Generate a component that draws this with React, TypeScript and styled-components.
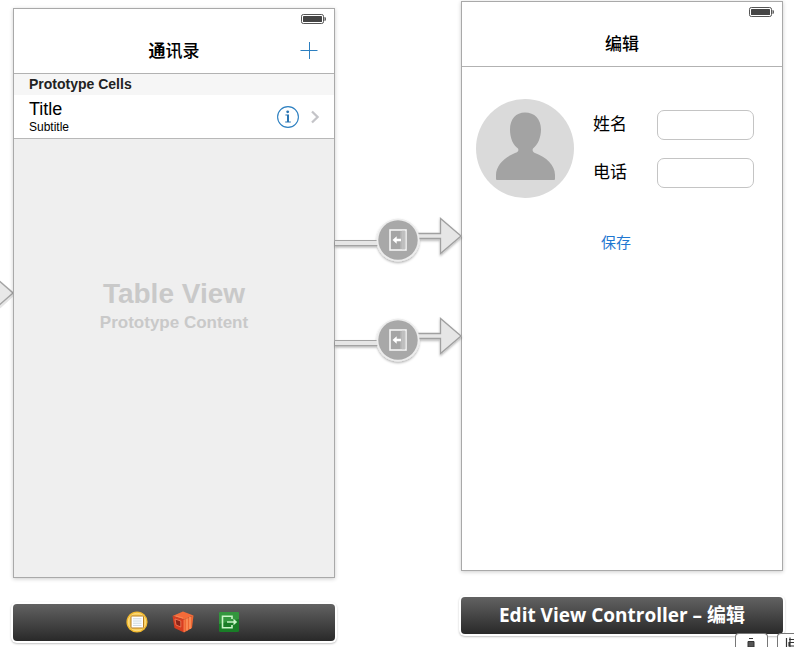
import React from "react";
import styled, { createGlobalStyle } from "styled-components";

const GlobalStyle = createGlobalStyle`
  * { box-sizing: border-box; }
  body {
    margin: 0;
    background: #fff;
    color: #000;
    font-family: "Liberation Sans", "Noto Sans CJK SC", sans-serif;
  }
  button, input { font: inherit; }
`;

const Canvas = styled.main`
  position: relative;
  display: grid;
  grid-template-columns: 13px minmax(0, 1fr) 126px minmax(0, 1fr) 11px;
  height: 100vh;
  overflow: hidden;
`;

const EntryLane = styled.div`
  padding-top: 278px;
`;

const SegueLane = styled.div`
  display: flex;
  flex-direction: column;
  gap: 48px;
  padding-top: 216px;
  z-index: 1;
`;

const Drawing = styled.svg`
  display: block;
  overflow: visible;
`;

const Scene = styled.section<{ $top: number }>`
  display: flex;
  flex-direction: column;
  gap: 26px;
  padding-top: ${(p) => p.$top}px;
`;

const Phone = styled.div<{ $bg: string }>`
  display: flex;
  flex-direction: column;
  min-height: 570px;
  background: ${(p) => p.$bg};
  border: 1px solid #a9a9a9;
  box-shadow: 0 1px 4px rgba(0, 0, 0, 0.2);
`;

const StatusBar = styled.div`
  display: flex;
  justify-content: flex-end;
  height: 20px;
  padding: 5px 8px 0 0;
  background: #fff;
`;

const NavBar = styled.header`
  display: grid;
  grid-template-columns: 1fr auto 1fr;
  align-items: center;
  height: 45px;
  background: #fff;
  border-bottom: 1px solid #b2b2b2;
`;

const NavTitle = styled.h1`
  grid-column: 2;
  margin: 0;
  padding-top: 2px;
  font-size: 17px;
  line-height: 24px;
  font-weight: 500;
`;

const IconButton = styled.button`
  display: block;
  padding: 0;
  border: 0;
  background: none;
  cursor: pointer;
`;

const AddButton = styled(IconButton)`
  justify-self: end;
  margin-right: 16px;
`;

const SectionHeader = styled.h2`
  margin: 0;
  padding: 0 15px;
  background: #f6f6f6;
  color: #222;
  font-size: 14px;
  line-height: 21px;
  font-weight: 700;
`;

const Cell = styled.div`
  display: flex;
  align-items: center;
  gap: 12px;
  height: 44px;
  padding: 0 15px;
  background: #fff;
  border-bottom: 1px solid #b8b8b8;
`;

const CellText = styled.div`
  flex: 1;
`;

const CellTitle = styled.div`
  font-size: 18px;
  line-height: 20px;
`;

const CellSubtitle = styled.div`
  font-size: 12px;
  line-height: 16px;
`;

const Placeholder = styled.div`
  padding-top: 137px;
  color: #c9c9c9;
  font-weight: 700;
  text-align: center;
`;

const PlaceholderTitle = styled.div`
  font-size: 28px;
  line-height: 35px;
`;

const PlaceholderNote = styled.div`
  font-size: 17px;
  line-height: 24px;
`;

const Dock = styled.footer`
  height: 37px;
  border-radius: 4px;
  background: linear-gradient(#626262, #292929);
  box-shadow: 0 0 0 2px #fff, 0 1px 2px 2px rgba(0, 0, 0, 0.24);
`;

const IconDock = styled(Dock)`
  display: flex;
  align-items: center;
  justify-content: center;
  gap: 24px;
  padding: 0 0 2px 18px;
`;

const TitleDock = styled(Dock)`
  color: #fff;
  font: 700 19px/36px "Open Sans", "Noto Sans CJK SC", sans-serif;
  text-align: center;
`;

const Form = styled.form`
  display: flex;
  align-items: flex-start;
  gap: 19px;
  padding: 32px 28px 0 14px;
`;

const Fields = styled.div`
  flex: 1;
  display: flex;
  flex-direction: column;
  gap: 18px;
  padding-top: 11px;
`;

const Field = styled.div`
  display: grid;
  grid-template-columns: 64px minmax(0, 1fr);
  align-items: center;
`;

const Label = styled.label`
  font-size: 17px;
  line-height: 28px;
`;

const TextBox = styled.input`
  width: 100%;
  height: 30px;
  padding: 0 8px;
  border: 1px solid #c4c4c4;
  border-radius: 7px;
  background: #fff;
`;

const SaveButton = styled.button`
  align-self: flex-start;
  margin-top: 24px;
  padding: 0 8px;
  border: 0;
  background: none;
  color: #1f78d1;
  font-size: 15px;
  line-height: 26px;
  cursor: pointer;
`;

const CanvasTools = styled.div`
  position: absolute;
  right: -16px;
  bottom: 0;
  display: flex;
  gap: 9px;
  z-index: 2;
`;

const ToolButton = styled.button`
  width: 33px;
  height: 14px;
  padding: 0;
  border: 1px solid #777;
  border-bottom: 0;
  border-radius: 4px 4px 0 0;
  background: #fff;
  overflow: hidden;
`;

const Battery = () => (
  <Drawing width="25" height="10" viewBox="0 0 25 10" aria-hidden="true">
    <rect x="0.5" y="0.5" width="22" height="9" rx="1.8" fill="#fff" stroke="#555" />
    <rect x="2" y="2" width="19" height="6" rx="0.6" fill="#454545" />
    <path d="M23.5 3h.6q.9.3.9 2t-.9 2h-.6z" fill="#555" />
  </Drawing>
);

const Segue = () => (
  <Drawing width="126" height="52" viewBox="0 0 126 52" aria-hidden="true">
    <defs>
      <filter id="lift" x="-20%" y="-20%" width="140%" height="150%">
        <feDropShadow dx="0" dy="1.5" stdDeviation="1.2" floodOpacity="0.3" />
      </filter>
    </defs>
    <g filter="url(#lift)">
      <path d="M0 24.5H44V29.5H0z" fill="#e6e6e6" />
      <path d="M0 24.5H44M0 29.5H44" stroke="#a3a3a3" />
      <path d="M82 17.5H106V2.5L126.5 20L106 37.5V22.5H82z" fill="#e6e6e6" />
      <path d="M82 17.5H105.5V2.5L126 20L105.5 37.5V22.5H82" fill="none" stroke="#a0a0a0" strokeWidth="1.3" />
      <circle cx="63" cy="24" r="21.5" fill="#ededed" />
    </g>
    <circle cx="63" cy="24" r="19.7" fill="#a8a8a8" />
    <rect x="55" y="14" width="16" height="20" fill="#a4a4a4" stroke="#f4f4f4" strokeWidth="1.6" />
    <path d="M66 15.2V33M67 15.2h3v17.6h-3z" fill="#bebebe" stroke="#c4c4c4" strokeWidth="0.8" />
    <path d="M57.5 24l4.2-3.8v2.5h4.3v2.6h-4.3v2.5z" fill="#fff" />
  </Drawing>
);

const EntryArrow = () => (
  <Drawing width="13" height="32" viewBox="0 0 13 32" aria-hidden="true">
    <path d="M-3 3L0 5L13 16L0 28L-3 30" fill="none" stroke="#000" strokeOpacity="0.1" strokeWidth="4" />
    <path d="M-3 1L13 15L-3 29z" fill="#e8e8e8" stroke="#a3a3a3" strokeWidth="1.4" />
  </Drawing>
);

const Avatar = () => (
  <Drawing width="98" height="99" viewBox="0 0 98 99" role="img" aria-label="头像">
    <ellipse cx="49" cy="49.5" rx="49" ry="49.5" fill="#dadada" />
    <path
      d="M49 13.5C58.5 13.5 65 20 65 30.5C65 39 61.5 46 57 49.5C56 51.5 57 53 59 54C70 58 79 66 79 76V80Q79 81 78 81H21Q20 81 20 80V76C20 66 29 58 39 54C42 53 43 51.5 42 49.5C37 46 34 39 34 30.5C34 20 40 13.5 49 13.5Z"
      fill="#a3a3a3"
    />
  </Drawing>
);

const ControllerIcon = () => (
  <Drawing width="22" height="22" viewBox="0 0 22 22" aria-hidden="true">
    <circle cx="11" cy="11" r="10.6" fill="#f2b92e" />
    <circle cx="11" cy="11" r="8.8" fill="#f8cf61" stroke="#ffe08b" strokeWidth="0.8" />
    <rect x="5" y="5" width="12.5" height="12" rx="0.8" fill="#fff" stroke="#b77c1c" />
    <path d="M7 7.8h8.5M7 10h8.5M7 12.2h8.5M7 14.4h8.5" stroke="#bccbd6" strokeWidth="0.8" />
  </Drawing>
);

const ResponderIcon = () => (
  <Drawing width="22" height="22" viewBox="0 0 22 22" aria-hidden="true">
    <path d="M.5 5L11 .5L21.5 4.5L12 8.5z" fill="#f46b39" />
    <path d="M.5 5L12 8.5V21.5L2.5 17z" fill="#d83d20" />
    <path d="M12 8.5L21.5 4.5L20 17L12 21.5z" fill="#ee6733" />
    <path d="M3 8L8.8 10V16L4 14z" fill="#8e2417" stroke="#f3835f" strokeWidth="0.8" />
    <path d="M15 7.5V19.5M18 6V18" stroke="#ff9b65" strokeWidth="1.3" />
    <path d="M4 5L11 7M12 8.5V21" stroke="#ff8e5e" strokeWidth="0.7" />
  </Drawing>
);

const ExitIcon = () => (
  <Drawing width="22" height="22" viewBox="0 0 22 22" aria-hidden="true">
    <rect x="1" y="1" width="20" height="20" rx="1.5" fill="#197d27" />
    <path d="M2 1h18q1 0 1 1v6L1 13V2q0-1 1-1" fill="#33963e" />
    <path d="M14 8V5.2H4.5V16.8H14V14" fill="none" stroke="#c9f5c7" strokeWidth="1.6" />
    <path d="M9 11h8" fill="none" stroke="#c9f5c7" strokeWidth="1.5" />
    <path d="M15.5 7.8L19.2 11l-3.7 3.2z" fill="#c9f5c7" />
  </Drawing>
);

const ListScene = () => (
  <Scene $top={8}>
    <Phone $bg="#efefef">
      <StatusBar><Battery /></StatusBar>
      <NavBar>
        <NavTitle><b>通</b>讯录</NavTitle>
        <AddButton type="button" aria-label="添加">
          <Drawing width="18" height="18" viewBox="0 0 18 18">
            <path d="M.5 8.5H17.5M9.5 0V17" stroke="#2c7fc0" />
          </Drawing>
        </AddButton>
      </NavBar>
      <SectionHeader>Prototype Cells</SectionHeader>
      <Cell>
        <CellText>
          <CellTitle>Title</CellTitle>
          <CellSubtitle>Subtitle</CellSubtitle>
        </CellText>
        <IconButton type="button" aria-label="详细信息">
          <Drawing width="22" height="22" viewBox="0 0 22 22">
            <circle cx="11" cy="11" r="10.4" fill="none" stroke="#2c7fc0" strokeWidth="1.1" />
            <circle cx="10.7" cy="5.8" r="1.4" fill="#2874b2" />
            <path d="M8.4 8.6H12V15.6H13.8V16.6H8.2V15.6H10V9.6H8.4z" fill="#2874b2" />
          </Drawing>
        </IconButton>
        <Drawing width="8" height="14" viewBox="0 0 8 14" aria-hidden="true">
          <path d="M1 1.5L6.6 7L1 12.5" fill="none" stroke="#c4c4c8" strokeWidth="2.3" />
        </Drawing>
      </Cell>
      <Placeholder>
        <PlaceholderTitle>Table View</PlaceholderTitle>
        <PlaceholderNote>Prototype Content</PlaceholderNote>
      </Placeholder>
    </Phone>
    <IconDock>
      <ControllerIcon />
      <ResponderIcon />
      <ExitIcon />
    </IconDock>
  </Scene>
);

const EditScene = () => (
  <Scene $top={1}>
    <Phone $bg="#fff">
      <StatusBar><Battery /></StatusBar>
      <NavBar><NavTitle>编辑</NavTitle></NavBar>
      <Form onSubmit={(event) => event.preventDefault()}>
        <Avatar />
        <Fields>
          <Field>
            <Label htmlFor="name">姓名</Label>
            <TextBox id="name" type="text" />
          </Field>
          <Field>
            <Label htmlFor="phone">电话</Label>
            <TextBox id="phone" type="tel" />
          </Field>
          <SaveButton type="submit">保存</SaveButton>
        </Fields>
      </Form>
    </Phone>
    <TitleDock>Edit View Controller – 编辑</TitleDock>
  </Scene>
);

export default function App() {
  return (
    <>
      <GlobalStyle />
      <Canvas>
        <EntryLane><EntryArrow /></EntryLane>
        <ListScene />
        <SegueLane>
          <Segue />
          <Segue />
        </SegueLane>
        <EditScene />
        <CanvasTools>
          <ToolButton type="button" aria-label="Align">
            <Drawing width="31" height="13" viewBox="0 0 31 13">
              <path d="M13 4.5H17M12 7.5H18V13H12z" fill="#555" stroke="#333" />
            </Drawing>
          </ToolButton>
          <ToolButton type="button" aria-label="Pin">
            <Drawing width="31" height="13" viewBox="0 0 31 13">
              <path d="M8.5 4V13M11 5.5H17M11 8.5H17V12H11zM12 3.5V13" fill="none" stroke="#333" strokeWidth="1.2" />
            </Drawing>
          </ToolButton>
        </CanvasTools>
      </Canvas>
    </>
  );
}
